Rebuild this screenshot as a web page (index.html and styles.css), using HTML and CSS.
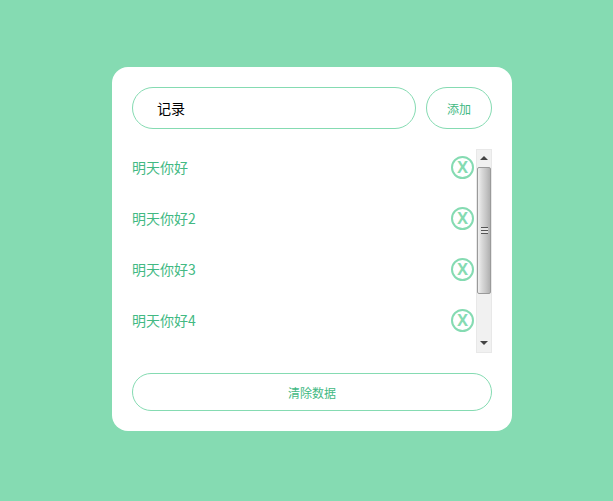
FILE: index.html
```html
<!DOCTYPE html>
<html lang="zh">
	<head>
		<meta charset="UTF-8" />
		<title>记录</title>
		<link rel="stylesheet" href="styles.css">
	</head>
	<body>
		<section class="card">
			<form class="add-form">
				<input class="add-input" type="text" value="记录" />
				<button class="add-btn" type="button">添加</button>
			</form>
			<div class="list-wrap">
				<ul class="list">
					<li class="item"><span>明天你好</span><button class="del" type="button">X</button></li>
					<li class="item"><span>明天你好2</span><button class="del" type="button">X</button></li>
					<li class="item"><span>明天你好3</span><button class="del" type="button">X</button></li>
					<li class="item"><span>明天你好4</span><button class="del" type="button">X</button></li>
				</ul>
				<div class="scrollbar">
					<div class="arrow arrow-up"></div>
					<div class="thumb"><div class="grip"></div></div>
					<div class="track"></div>
					<div class="arrow arrow-down"></div>
				</div>
			</div>
			<button class="clear-btn" type="button">清除数据</button>
		</section>
	</body>
</html>
```

FILE: styles.css
```css
* {
	box-sizing: border-box;
}

body {
	margin: 0;
	height: 501px;
	padding-top: 67px;
	background-color: #85dbb2;
	font-family: "Noto Sans CJK SC", "Liberation Sans", sans-serif;
	overflow: hidden;
}

.card {
	display: flex;
	flex-direction: column;
	width: 400px;
	height: 364px;
	margin-left: 112px;
	padding: 20px;
	background-color: #fff;
	border-radius: 16px;
}

.add-form {
	display: flex;
	gap: 10px;
	height: 42px;
}

.add-input {
	width: 284px;
	height: 42px;
	padding: 0 24px;
	font-family: inherit;
	font-size: 14px;
	color: #000;
	border: 1px solid #85dbb2;
	border-radius: 21px;
	outline: none;
}

.add-btn {
	width: 66px;
	height: 42px;
	padding: 0;
	font-family: inherit;
	font-size: 12px;
	color: #42b983;
	background-color: #fff;
	border: 1px solid #85dbb2;
	border-radius: 21px;
}

.list-wrap {
	display: flex;
	justify-content: space-between;
	height: 204px;
	margin-top: 20px;
}

.list {
	width: 342px;
	margin: 0;
	padding: 0;
	list-style: none;
}

.item {
	display: flex;
	justify-content: space-between;
	align-items: flex-start;
	height: 51px;
	padding-top: 7px;
	font-size: 14px;
	line-height: 22px;
	color: #42b983;
}

.del {
	width: 23px;
	height: 23px;
	padding: 0;
	font-family: "Open Sans", "Liberation Sans", sans-serif;
	font-size: 16px;
	font-weight: 700;
	line-height: 17px;
	color: #85dbb2;
	background-color: #fff;
	border: 2.5px solid #85dbb2;
	border-radius: 50%;
}

.scrollbar {
	display: flex;
	flex-direction: column;
	width: 16px;
	background-color: #f1f1f1;
	border: 1px solid #e8e8e8;
}

.arrow {
	display: flex;
	justify-content: center;
	align-items: center;
	height: 17px;
}

.arrow-up {
	padding-bottom: 2px;
}

.arrow-down {
	padding-bottom: 2px;
}

.arrow::before {
	content: "";
	border-left: 4px solid transparent;
	border-right: 4px solid transparent;
}

.arrow-up::before {
	border-bottom: 4px solid #444;
}

.arrow-down::before {
	border-top: 4px solid #444;
}

.thumb {
	display: flex;
	justify-content: center;
	align-items: center;
	height: 127px;
	background: linear-gradient(to right, #f0f0f0, #d8d8d8 35%, #c4c4c4 70%, #b0b0b0);
	border: 1px solid #9a9a9a;
	border-radius: 2px;
}

.grip {
	width: 7px;
	height: 7px;
	background: repeating-linear-gradient(to bottom, #555 0, #555 1px, #e4e4e4 1px, #e4e4e4 3px);
}

.track {
	flex: 1;
}

.clear-btn {
	width: 360px;
	height: 38px;
	margin-top: 20px;
	padding: 0;
	font-family: inherit;
	font-size: 12px;
	color: #42b983;
	background-color: #fff;
	border: 1px solid #85dbb2;
	border-radius: 19px;
}
```
